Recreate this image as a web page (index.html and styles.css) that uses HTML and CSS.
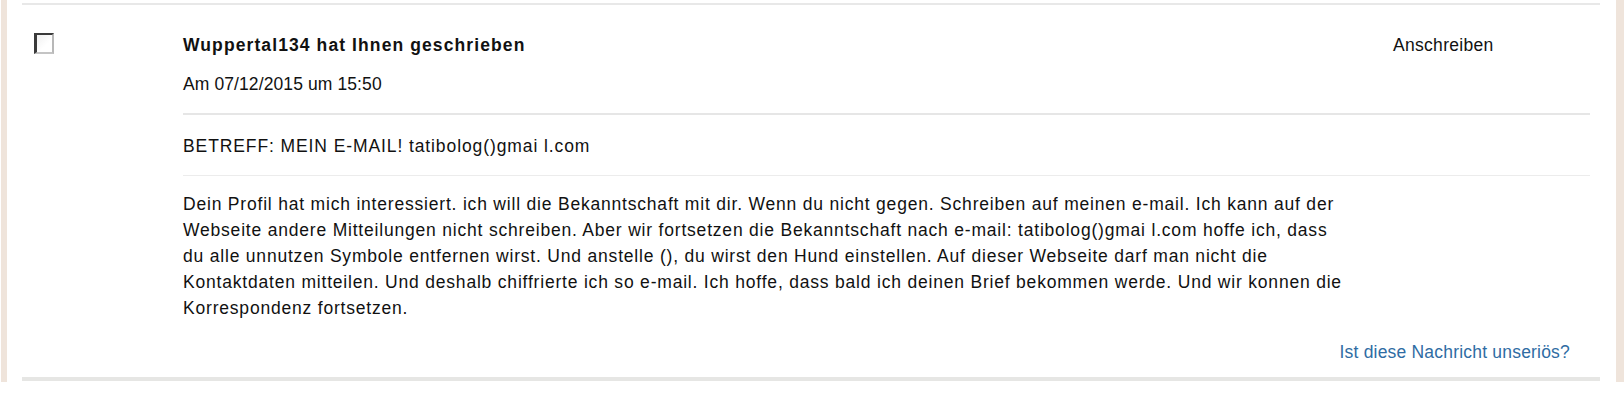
FILE: index.html
```html
<!DOCTYPE html>
<html lang="de">
<head>
<meta charset="utf-8">
<title>Nachricht</title>
<link rel="stylesheet" href="styles.css">
</head>
<body>
<div class="frame">
  <div class="card">
    <div class="row">
      <div class="select"><span class="checkbox"></span></div>
      <div class="content">
        <div class="head">
          <div class="head-main">
            <div class="title">Wuppertal134 hat Ihnen geschrieben</div>
            <div class="date">Am 07/12/2015 um 15:50</div>
          </div>
          <div class="actions">Anschreiben</div>
        </div>
        <div class="subject">BETREFF: MEIN E-MAIL! tatibolog()gmai l.com</div>
        <div class="message">Dein Profil hat mich interessiert. ich will die Bekanntschaft mit dir. Wenn du nicht gegen. Schreiben auf meinen e-mail. Ich kann auf der Webseite andere Mitteilungen nicht schreiben. Aber wir fortsetzen die Bekanntschaft nach e-mail: tatibolog()gmai l.com hoffe ich, dass du alle unnutzen Symbole entfernen wirst. Und anstelle (), du wirst den Hund einstellen. Auf dieser Webseite darf man nicht die Kontaktdaten mitteilen. Und deshalb chiffrierte ich so e-mail. Ich hoffe, dass bald ich deinen Brief bekommen werde. Und wir konnen die Korrespondenz fortsetzen.</div>
        <div class="report"><a href="#" class="report-link">Ist diese Nachricht unseriös?</a></div>
      </div>
    </div>
  </div>
</div>
</body>
</html>
```

FILE: styles.css
```css
html, body {
  margin: 0;
  padding: 0;
  background: #ffffff;
}
body {
  font-family: "Liberation Sans", Arial, sans-serif;
  font-size: 17.5px;
  line-height: 26px;
  color: #111111;
}
.frame {
  margin-left: 1px;
  width: 1623px;
  height: 382px;
  box-sizing: border-box;
  border-left: 6px solid #efe4db;
  border-right: 8px solid #efe4db;
  padding: 3px 16px 0 15px;
}
.card {
  border-top: 2px solid #e8e8e8;
  border-bottom: 4px solid #e6e6e4;
}
.row {
  display: flex;
}
.select {
  width: 161px;
  flex: none;
  padding: 28px 0 0 12px;
  box-sizing: border-box;
}
.checkbox {
  display: block;
  width: 20px;
  height: 21px;
  box-sizing: border-box;
  border-style: solid;
  border-width: 2px 2px 2px 3px;
  border-color: #3a3a3a #b8b8b8 #c4c4c4 #3a3a3a;
  background: linear-gradient(135deg, #f0f0f0, #ffffff 60%);
}
.content {
  flex: 1;
  padding-top: 27px;
  padding-right: 10px;
}
.head {
  display: flex;
}
.head-main {
  flex: 1;
  border-bottom: 2px solid #e6e6e6;
  padding-bottom: 16px;
}
.actions {
  width: 197px;
  flex: none;
  border-bottom: 2px solid #e6e6e6;
  letter-spacing: 0.3px;
}
.title {
  font-weight: bold;
  letter-spacing: 1.1px;
  color: #111111;
}
.date {
  margin-top: 13px;
  letter-spacing: 0.1px;
}
.subject {
  padding: 18px 0 16px;
  border-bottom: 1px solid #ececec;
  letter-spacing: 0.9px;
}
.message {
  padding-top: 15px;
  width: 1165px;
  letter-spacing: 0.8px;
}
.report {
  text-align: right;
  padding: 18px 20px 12px 0;
}
.report-link {
  color: #2f6ca3;
  text-decoration: none;
  letter-spacing: 0.2px;
}
```
